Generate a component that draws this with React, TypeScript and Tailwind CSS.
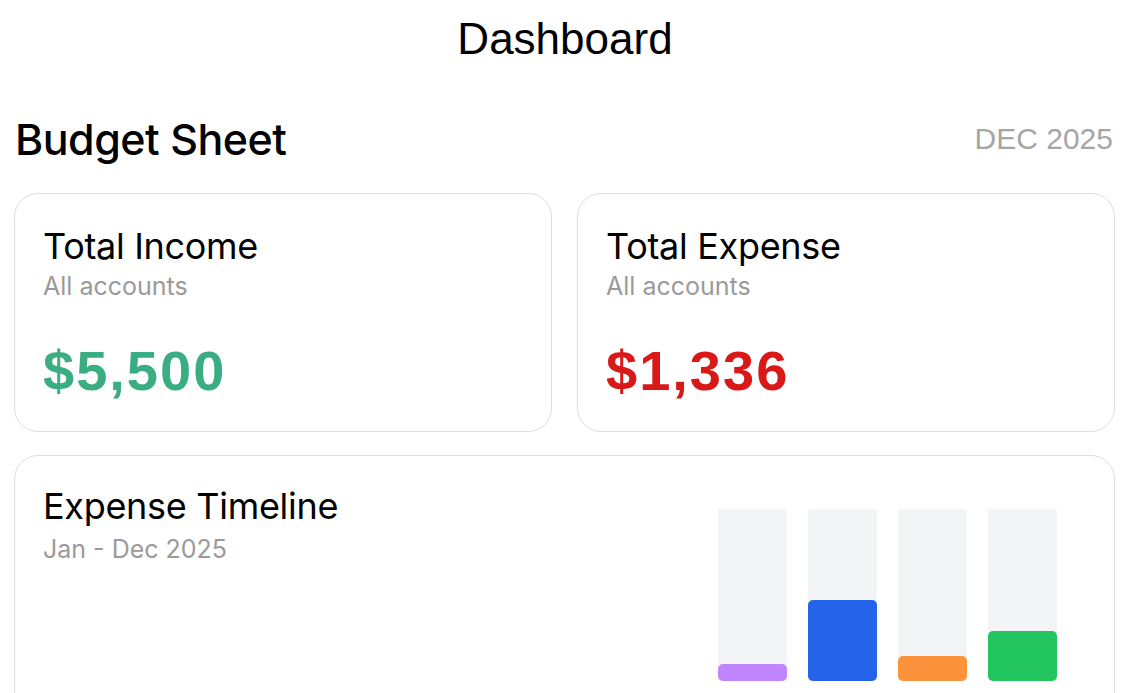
import React from "react";

const bars = [
  { h: 17, c: "bg-[#c084fc]" },
  { h: 81, c: "bg-[#2563eb]" },
  { h: 25, c: "bg-[#fb923c]" },
  { h: 50, c: "bg-[#22c55e]" },
];

const arial = { fontFamily: "'Liberation Sans', Arial, sans-serif" };

function StatCard({ title, value, color }: { title: string; value: string; color: string }) {
  return (
    <div className="h-[239px] rounded-[24px] border border-[#dedede] px-[28px] pt-[34px]">
      <div className="text-[36px] leading-none tracking-[-0.3px]">{title}</div>
      <div className="text-[25px] leading-none text-[#9a9a9a] mt-[10px]">All accounts</div>
      <div className={`text-[56px] leading-none font-bold tracking-[2px] mt-[44px] ${color}`} style={arial}>{value}</div>
    </div>
  );
}

export default function App() {
  return (
    <div className="w-[1136px] h-[693px] overflow-hidden bg-white text-black" style={{ fontFamily: "Inter, 'Noto Sans', sans-serif" }}>
      <div className="pt-[17px] flex justify-center">
        <h1 className="text-[44px] leading-none font-normal pr-[6px]" style={arial}>Dashboard</h1>
      </div>
      <div className="pl-[14px] pr-[21px]">
        <div className="flex items-start justify-between mt-[57px]">
          <div className="text-[43px] leading-none font-medium tracking-[-0.5px] pl-[1px]">Budget Sheet</div>
          <div className="text-[30px] leading-none text-[#a6a6a6] mt-[6px] pr-[2px]" style={arial}>DEC 2025</div>
        </div>
        <div className="grid grid-cols-2 gap-[25px] mt-[32px]">
          <StatCard title="Total Income" value="$5,500" color="text-[#3aae82]" />
          <StatCard title="Total Expense" value="$1,336" color="text-[#d91818]" />
        </div>
        <div className="mt-[23px] h-[300px] rounded-[24px] border border-[#dedede] pl-[28px] pr-[57px] pt-[32px] flex justify-between">
          <div>
            <div className="text-[36px] leading-none tracking-[-0.3px]">Expense Timeline</div>
            <div className="text-[25px] leading-none text-[#9a9a9a] mt-[13px]">Jan - Dec 2025</div>
          </div>
          <div className="flex gap-[21px] h-[172px] mt-[21px]">
            {bars.map((b, i) => (
              <div key={i} className="w-[69px] h-full bg-[#f3f4f6] rounded-[2px] flex flex-col justify-end">
                <div className={`${b.c} rounded-[5px] w-full`} style={{ height: b.h }} />
              </div>
            ))}
          </div>
        </div>
      </div>
    </div>
  );
}
